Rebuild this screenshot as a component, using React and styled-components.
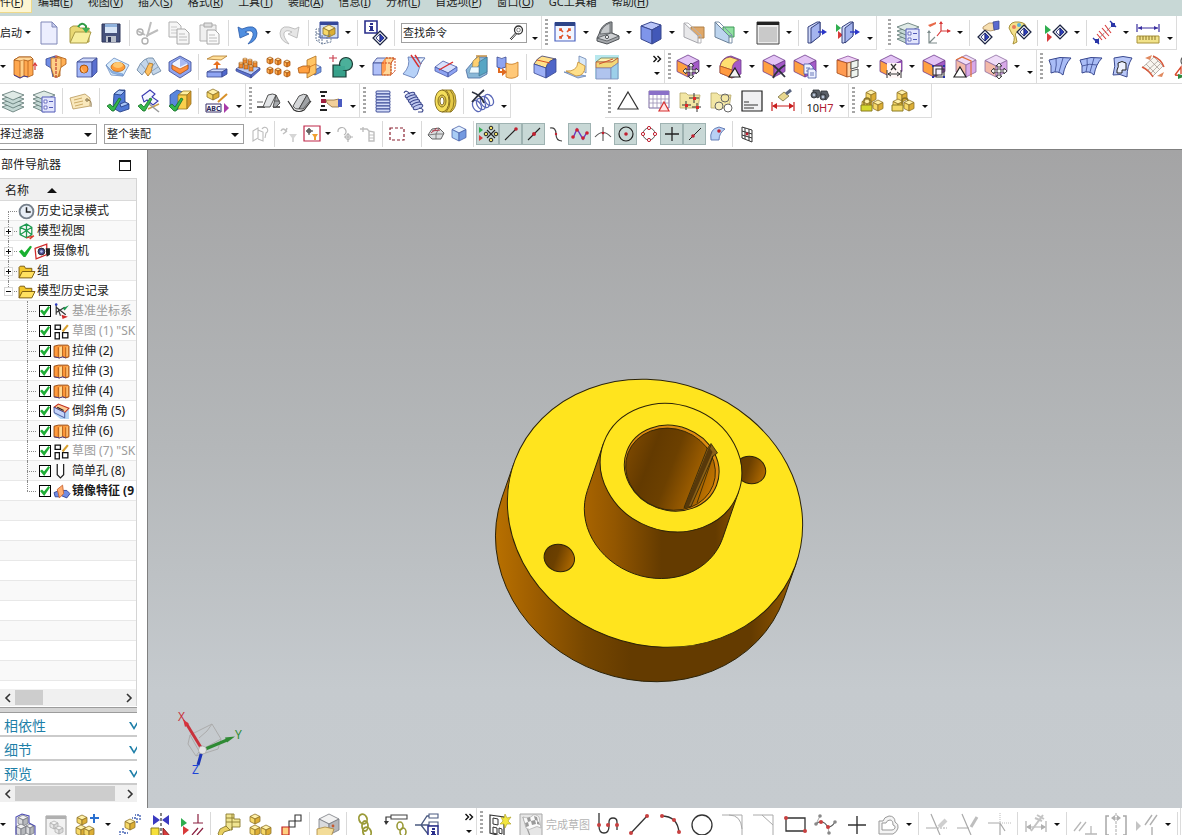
import React, { useState } from 'react';
import styled, { createGlobalStyle, css } from 'styled-components';

const GlobalStyle = createGlobalStyle`
  * { box-sizing: border-box; }
  body {
    margin: 0;
    background: #fff;
    color: #1a1a1a;
    font: 12px/20px "Noto Sans", "Noto Sans CJK SC", sans-serif;
    overflow: hidden;
  }
  button, input, select { font: inherit; color: inherit; }
`;

// ---------- drawing helpers ----------

const S = (d, c = '#333', w = 1, dash) => (
  <path d={d} fill="none" stroke={c} strokeWidth={w} strokeDasharray={dash} />
);
const F = (d, c, s = 'none', w = 1) => <path d={d} fill={c} stroke={s} strokeWidth={w} />;
const O = (x, y, r, c = 'none', s = 'none', w = 1) => (
  <circle cx={x} cy={y} r={r} fill={c} stroke={s} strokeWidth={w} />
);

const TINTS = {
  blue: ['#cfd9fb', '#8ea4f2', '#5068cc', '#39488f'],
  sky: ['#e2f0ff', '#a9cdf5', '#7399e0', '#4a62a8'],
  orange: ['#ffe3a6', '#ffb055', '#ee8420', '#a85510'],
  gold: ['#fff0a8', '#f6d868', '#dcae35', '#8f7428'],
  grey: ['#f2f2f2', '#d9dadd', '#b5b7bb', '#777a80'],
  pale: ['#f4f4f4', '#e8e8e8', '#dadada', '#b0b0b0'],
  violet: ['#e3c4f5', '#ffa040', '#a45ac8', '#6d3a8c'],
  lilac: ['#efdcf8', '#f3b9a8', '#d8a8e8', '#8c6aa0']
};

const Box = ({ x, y, s, h, t = 'blue' }) => {
  const [top, left, right, edge] = TINTS[t];
  const k = s / 2;
  return (
    <g stroke={edge} strokeWidth="0.8" strokeLinejoin="round">
      <path d={`M${x} ${y}l${s} ${k}l${-s} ${k}l${-s} ${-k}z`} fill={top} />
      <path d={`M${x - s} ${y + k}l${s} ${k}v${h}l${-s} ${-k}z`} fill={left} />
      <path d={`M${x + s} ${y + k}l${-s} ${k}v${h}l${s} ${-k}z`} fill={right} />
    </g>
  );
};

const Sheets = () => (
  <g stroke="#5a7470" strokeWidth="0.8" fill="#c4d8d4">
    <path d="M1 18l11-4 11 4-11 5z" />
    <path d="M1 14l11-4 11 4-11 5z" />
    <path d="M1 10l11-4 11 4-11 5z" />
    <path d="M1 6l11-4 11 4-11 5z" fill="#dfeae6" />
  </g>
);

const SheetList = () => (
  <>
    <Sheets />
    {F('M10 8h13v15H10z', '#e2e5fc', '#5058b8')}
    {F('M12 11h3v3h-3zM12 17h3v3h-3z', '#fff', '#5058b8', 0.8)}
    {S('M17 12.500h4M17 18.500h4', '#5058b8')}
  </>
);

const Cross4 = () => F(
  'M15 8l3 3h-2v4h4v-2l3 3-3 3v-2h-4v4h2l-3 3-3-3h2v-4h-4v2l-3-3 3-3v2h4v-4h-2z',
  '#f4f4f4', '#333', 0.9
);

const Diamond = ({ x, y }) => (
  <g transform={`translate(${x} ${y})`}>
    {F('M0 -7l7 7-7 7-7-7z', '#dfe4ea', '#1c2340', 1.2)}
    {F('M0 -4v8l-4-4z', '#fff', '#1c2370', 0.8)}
    {F('M0 -4v8l4-4z', '#2a3dbb', '#1c2370', 0.8)}
  </g>
);

const Check = () => F('M1 17l3-2 3 3 6-9 2 1-7 12H6z', '#35b84a', '#187028', 0.8);

const Locked = ({ open }) => (
  <>
    <Box x={11} y={1} s={5} h={7} t="gold" />
    <Box x={18} y={11} s={5} h={6} t="gold" />
    <Box x={7} y={10} s={5} h={6} t="gold" />
    {open ? S('M11 15v-3a3 3 0 0 1 6 0', '#8a7426', 1.4) : S('M4 16v-4a3 3 0 0 1 6 0v4', '#8a7426', 1.4)}
    {F('M1 16h11v6H1z', open ? '#f3d968' : '#d4d82e', '#8a7a20')}
  </>
);

// ---------- 24px icons ----------

const ICONS = {
  new: <>{F('M4 1h11l5 5v17H4z', '#eceefe', '#8088b8')}{F('M15 1v5h5z', '#c9cff0', '#8088b8')}</>,
  open: (
    <>
      {F('M2 21V7l3-2h5l2 2h9v14z', '#e9d873', '#a99a45')}
      {F('M2 22L7 11h16l-4 11z', '#f7ee9e', '#a99a45')}
      {S('M10 6q4-6 8-1v4', '#2f9a45', 2)}
      {F('M14 7h8l-4 5z', '#3fae54')}
    </>
  ),
  save: (
    <>
      {F('M3 3h18v18H3z', '#46527c', '#2c3558')}
      {F('M6 3h12v9H6z', '#d7e4f5')}
      {F('M6 3h12v3H6z', '#8fb2dd')}
      {F('M7 15h10v6H7z', '#b9bfca')}
      {F('M9 16h3v5H9z', '#2c3558')}
    </>
  ),
  cut: (
    <>
      {S('M11 16L15 1M10 15L22 9M9 14L2 10', '#bdbdbd', 2)}
      {O(9, 20, 3, 'none', '#b0b0b0', 1.4)}
      {O(4, 11, 3, 'none', '#b0b0b0', 1.4)}
    </>
  ),
  copy: (
    <>
      {F('M2 1h8l4 4v11H2z', '#f6f6f6', '#b0b0b0')}
      {S('M4 6h6M4 9h7M4 12h7', '#cacaca')}
      {F('M10 8h8l4 4v11H10z', '#f6f6f6', '#a8a8a8')}
      {S('M12 13h6M12 16h8M12 19h8', '#bcbcbc')}
    </>
  ),
  paste: (
    <>
      {F('M2 4h16v16H2z', '#f0f0f0', '#b0b0b0')}
      {F('M6 2h8v4H6z', '#dedede', '#a8a8a8')}
      {F('M9 9h8l4 4v10H9z', '#fafafa', '#a8a8a8')}
      {S('M11 14h6M11 17h8M11 20h8', '#bcbcbc')}
    </>
  ),
  undo: F('M3 6l2 11 9-4-4-2q6-3 8 1 1 4-5 11 9-3 9-11-1-10-15-4z', '#4f8ee0', '#2b5ba8', 0.8),
  redo: F('M21 6l-2 11-9-4 4-2q-6-3-8 1-1 4 5 11-9-3-9-11 1-10 15-4z', '#e6e6e6', '#b4b4b4', 0.8),
  assembly: (
    <>
      {F('M5 1h18v16H5z', '#cfdcf5', '#35489a')}
      {F('M5 1h18v3H5z', '#35489a')}
      <Box x={14} y={4} s={6} h={6} t="gold" />
      {S('M5 8H1v11l6 4 9-2v-4M1 12l6 3 9-1M4 9v12M7 15v8M12 16v6', '#6a7c98', 1, '2 1')}
    </>
  ),
  info: (
    <>
      {F('M1 0h12v12H1z', '#fff', '#2a2f8c', 1.6)}
      {F('M6 2h3v2H6zM5 5h4v4h1v1H5V9h1V6H5z', '#2a2f8c')}
      <Diamond x={16} y={17} />
    </>
  ),
  fit: (
    <>
      {F('M2 2h20v18H2z', '#f2f6ff', '#4a62c0', 1.2)}
      {F('M2 1h20v4H2z', '#2c4488')}
      <g stroke="#e0532a" strokeWidth="1.6" fill="none">
        <path d="M7 10V8h2M7 8l3 3M17 10V8h-2M17 8l-3 3M7 15v2h2M7 17l3-3M17 15v2h-2M17 17l-3-3" />
      </g>
    </>
  ),
  bracket: (
    <>
      {F('M1 17l2-4q2-9 11-12h2v11l7 3v3l-12 5-10-3z', '#a5a8ac', '#4e5256')}
      {F('M4 13q2-8 10-11v10z', '#c6c9cc', '#5e6266', 0.8)}
      {F('M1 17l14-5 8 3-12 5z', '#d0d2d5', '#4e5256', 0.8)}
      {O(11, 16, 1.6, '#fff', '#4e5256')}
    </>
  ),
  cube: (
    <>
      {F('M2 5L12 1l10 3-9 5z', '#b9c5f8', '#39488f')}
      {F('M2 5l11 4v14L2 18z', '#7f95ea', '#39488f')}
      {F('M22 4v14l-9 5V9z', '#4258b8', '#39488f')}
    </>
  ),
  clip: (
    <>
      {F('M9 6h13v11H9z', '#e0a868', '#b08048')}
      {F('M2 2l14 13v7L2 16z', '#e8e8ea', '#a6a6ac')}
      {S('M2 2l4 0 13 12v8h-3M16 15l3-1', '#b4b4b8')}
    </>
  ),
  clipEdit: (
    <>
      {F('M10 6h11v10H10z', '#8fe0a0', '#3f9a58')}
      {F('M2 1l14 14v7L2 16z', '#bcd4ee', '#6a8098')}
      {S('M2 1l4 0 13 13v8h-3M16 15l3-1', '#7a90a8')}
    </>
  ),
  pane: <>{F('M1 1h22v22H1z', '#ececec', '#444')}{F('M1 1h22v3H1z', '#222')}{F('M3 6h18v15H3z', '#c9c9c9')}</>,
  door: (
    <>
      {F('M3 6l9-5h3v13l-9 8H3z', '#cfd8f8', '#34407c')}
      {F('M6 7l9-6v14l-9 7z', '#a4b4ee', '#34407c')}
      {S('M13 11h6', '#2a36c8', 1.4)}
      {F('M17 8l5 3-5 3z', '#2a36c8')}
    </>
  ),
  doors: (
    <>
      {F('M0 3l5 4-5 4z', '#2fae4f')}
      {F('M2 10l5 4-5 4z', '#d83a3a')}
      {F('M6 6l8-5h3v13l-9 8H6z', '#cfd8f8', '#34407c')}
      {F('M9 7l8-6v14l-8 7z', '#a4b4ee', '#34407c')}
      {S('M14 11h6', '#2a36c8', 1.4)}
      {F('M19 8l5 3-5 3z', '#2a36c8')}
    </>
  ),
  layersList: <SheetList />,
  axes: (
    <>
      {S('M14 10V1M14 10h9M14 10l-4 5', '#d83a3a', 1.2)}
      {F('M12 3l2-3 2 3zM20 8l4 2-4 2z', '#d83a3a')}
      {F('M1 4l8-3v2l-6 3z', '#e86a4a')}
      {S('M2 10v12h8M2 22l6-6', '#7e8c8c', 1.2)}
      {F('M0 12l2-3 2 3z', '#7e8c8c')}
    </>
  ),
  handDiamond: (
    <>
      <Diamond x={9} y={16} />
      {F('M7 6l6-4 6 0v7l-5 1-7-2z', '#f7dfb0', '#a8895a', 0.8)}
      {F('M17 1l6-1v8l-5 1z', '#5a6ad0', '#39488f', 0.8)}
    </>
  ),
  palette: (
    <>
      {F('M2 7q1-7 10-6 9 1 7 8l-4 4-4-2q-4 1-2 5l1 5-4 2q3-8-1-10z', '#f4e08a', '#a8923a')}
      {O(7, 6, 2, '#e8785a')}
      {O(12, 4, 2, '#5ab0d8')}
      {O(16, 6, 2, '#8fcf6a')}
      <Diamond x={17} y={11} />
    </>
  ),
  playDiamond: (
    <>
      {F('M1 4l6 5-6 4z', '#2fae4f')}
      {F('M3 12l5 4-5 5z', '#d83a3a')}
      <Diamond x={16} y={11} />
    </>
  ),
  measure: (
    <>
      {S('M3 20L21 3', '#777', 1, '2 1')}
      {S('M6 10l7 8M9 7l7 8M12 4l6 8M4 13l5 6', '#d83a3a', 1.1)}
      {S('M0 17l6 6M17 0l6 6', '#2a36a8', 1.4)}
      {F('M2 18h4v4H2zM18 2h4v4h-4z', '#2a36a8')}
    </>
  ),
  ruler: (
    <>
      {S('M1 3v8M23 3v8M2 7h20', '#3a2fa0', 1.2)}
      {F('M2 7l4-2v4zM22 7l-4-2v4z', '#3a2fa0')}
      {F('M1 15h22v7H1z', '#f2e38a', '#a8923a')}
      {S('M4 15v4M7 15v4M10 15v4M13 15v4M16 15v4M19 15v4', '#8a762a')}
    </>
  ),
  extrude: (
    <>
      {F('M1 5l5-3h12l2 2v16l-5 2-4-1-4 2-6-3z', '#ffa850', '#a85510', 0.8)}
      {F('M1 5l5-3h12l2 2-5 2-4-1-4 1z', '#ffd79a', '#a85510', 0.8)}
      {F('M7 6l4-1v16l-4 2z', '#ffcf88')}
      {S('M7 6v17M11 5v16M15 6v16', '#b86018', 0.8)}
      {S('M1 20l6 3 4-2 4 1', '#3a3a9a', 1)}
      {S('M22 8v7M20 11l2-3 2 3', '#d83a3a', 1.2)}
    </>
  ),
  revolve: (
    <>
      {F('M2 4l9-3v11l-2 10-2-9-5-3z', '#6f8ce4', '#39488f', 0.8)}
      {F('M22 4l-9-3v21l3-1v-8l6-4z', '#ffb055', '#a85510', 0.8)}
      {F('M7 3h10v9l-3 10h-4L7 12z', '#ffcf88', '#b86818', 0.8)}
      {S('M12 0v24', '#b02020', 1, '3 1')}
    </>
  ),
  holeCube: (
    <>
      {F('M2 7l6-4h14l-5 4z', '#cfd9fb', '#39488f', 0.8)}
      {F('M2 7h15v15H2z', '#a4b8f8', '#39488f', 0.8)}
      {F('M22 3v14l-5 5V7z', '#5a70d0', '#39488f', 0.8)}
      {O(9, 14, 4, '#ff9a40', '#a85510')}
      {F('M7 12a4 4 0 0 0 4 6 5 5 0 0 1-4-6z', '#ffe0a0')}
    </>
  ),
  pad: (
    <>
      {F('M0 10L8 3l15 7-6 11L5 20z', '#d8ecfc', '#6a8cc0', 0.8)}
      {F('M0 10l6 8 11 3v-2L6 16z', '#8fb6e8', '#6a8cc0', 0.6)}
      <ellipse cx="12" cy="12" rx="7" ry="4.500" fill="#ff9c38" stroke="#b86818" strokeWidth="0.8" />
      <ellipse cx="12" cy="10" rx="5" ry="3" fill="#ffc870" />
    </>
  ),
  rib: (
    <>
      {F('M0 15Q6 1 16 3l8 13-8 4q-2-7-8-4l-3 4z', '#c4d6ea', '#66809c', 0.8)}
      {F('M8 17l4-9 4 1-2 8-3 4z', '#ffc060', '#a87020', 0.8)}
      {S('M3 8l6 7M9 4l3 6M18 8l-4 5M21 12l-6 4', '#7a94b0', 0.8)}
    </>
  ),
  inset: (
    <>
      {F('M12 1l11 6v9l-11 7-11-7V7z', '#8fa4f0', '#39488f', 0.8)}
      {F('M12 3l8 5v6l-8 5-8-5V8z', '#eef3ff', '#5068b8', 0.8)}
      {F('M4 10l8 4 8-4v4l-8 5-8-5z', '#ff8e3c', '#c05a18', 0.8)}
      {F('M12 3l8 5-8 4z', '#a9baf4')}
    </>
  ),
  offsetUp: (
    <>
      {F('M2 4l6-3h14l-6 4z', '#ffdf9a', '#b07828', 0.8)}
      {S('M12 15V9', '#e87020', 2)}
      {F('M8 10l4-4 4 4z', '#e87020')}
      {F('M2 17l6-3h14l-5 3z', '#cfd9fb', '#39488f', 0.8)}
      {F('M2 17h15v5H2z', '#8ea4f2', '#39488f', 0.8)}
      {F('M22 14v5l-5 3v-5z', '#5068cc', '#39488f', 0.8)}
    </>
  ),
  studs: (
    <>
      {F('M0 14l9-6 15 5-9 7z', '#bccdf8', '#39488f', 0.7)}
      {F('M0 14l15 6v3L0 16zM15 20l9-7v2l-9 8z', '#5a70d0', '#39488f', 0.7)}
      {[[9, 7], [14, 8], [19, 10], [5, 11], [10, 12], [15, 14]].map(([x, y]) => (
        <g key={`${x}-${y}`}>
          <rect x={x - 2} y={y - 3} width="4" height="5" fill="#f08a30" stroke="#8a4a10" strokeWidth="0.6" />
          <ellipse cx={x} cy={y - 3} rx="2" ry="1" fill="#ffd08a" stroke="#8a4a10" strokeWidth="0.4" />
        </g>
      ))}
    </>
  ),
  cubes: (
    <>
      {[[3, 2], [11, 3], [20, 5], [3, 12], [11, 13], [20, 15]].map(([x, y]) => (
        <Box key={`${x}-${y}`} x={x} y={y} s={3} h={4} t="orange" />
      ))}
    </>
  ),
  mirror: (
    <>
      <Box x={17} y={9} s={6} h={5} t="sky" />
      {F('M9 5l9-4v17l-9 5z', '#ffc565', '#b07020', 0.8)}
      {F('M0 13l5-2h7l-1 7H1z', '#ffa040', '#a85510', 0.8)}
      {S('M9 13l9-4', '#d88028')}
    </>
  ),
  unite: (
    <>
      {F('M4 10h13v12H4z', '#37a08a', '#1c3a34', 1.2)}
      {O(17, 9, 6.5, '#4bb09a', '#1c3a34', 1.2)}
      {F('M5 11h11v4H5z', '#3fa892')}
      {S('M4 0v7M0 3h8', '#c83a4a', 1.1)}
    </>
  ),
  trimBox: (
    <>
      {F('M1 8l4-5h10l-3 5z', '#cfd9fb', '#39488f', 0.8)}
      {F('M1 8h9v12H1z', '#b0c0f8', '#39488f', 0.8)}
      {F('M10 8l4-5h8l-3 5v12h-9z', '#ffd79a', '#c86a18', 0.8)}
      {F('M10 8l4-5v12l-4 5z', '#ff9a50')}
      {S('M14 3h9v13l-4 4h-9M19 8v12M10 8h9l4-5', '#d04a20', 1, '2 1')}
    </>
  ),
  trimSheet: (
    <>
      {F('M5 2l17 1q-5 5-6 11t-5 9L0 19Q8 11 5 2z', '#b7d2f8', '#5a74b0', 0.8)}
      {S('M8 0l8 12M12 0l6 9', '#d83030', 1.4)}
      {F('M15 3h7q-4 3-4 6z', '#eef5ff', '#5a74b0', 0.6)}
    </>
  ),
  slab: (
    <>
      {F('M1 12l8-6 14 6-9 6z', '#d7e0fc', '#4a5aa8', 0.8)}
      {F('M1 12l13 6v4L1 16zM14 18l9-6v4l-9 6z', '#8ea4f2', '#4a5aa8', 0.8)}
      {S('M5 15L19 7', '#d83030', 1.4)}
    </>
  ),
  draft: (
    <>
      {F('M1 15L12 2h10v17l-7 4H3z', '#8ab8d8', '#4a6aa0', 0.8)}
      {F('M8 6l6-5 1 8-8 9z', '#ffd070', '#a88030', 0.6)}
      {F('M14 7l8-5v15l-8 4z', '#58a6c4', '#3a6a88', 0.6)}
      {F('M6 12h8v6H4z', '#eefaff', '#5a84a8', 0.6)}
      {S('M11 1h11', '#c08838', 1.4)}
    </>
  ),
  replace: (
    <>
      {F('M1 2q5 3 9 0v10q-5 3-9 0z', '#8ea4f2', '#39488f', 0.8)}
      {F('M10 8q6 3 12-1v14q-6 4-12 1z', '#ffc878', '#c87a20', 0.8)}
      {S('M3 13v4h4', '#e06a20', 2)}
      {F('M6 13l5 4-5 4z', '#e06a20')}
    </>
  ),
  edgeBlend: (
    <>
      {F('M1 9q3-6 8-8l14 3q-8 1-10 9z', '#ffe08a', '#3a3a6a', 0.8)}
      {F('M1 9l12 4v10L1 18z', '#9db0f6', '#39488f', 0.8)}
      {F('M23 4v13l-10 6V13q2-8 10-9z', '#4f66c8', '#39488f', 0.8)}
      {S('M4 5l13 3', '#d85020', 1)}
    </>
  ),
  faceBlend: (
    <>
      {F('M15 1l7 3v14l-7-5z', '#d8e8fa', '#6a84b0', 0.8)}
      {F('M0 17l9 1 13 3-8 2z', '#a8c4f4', '#6a84b0', 0.8)}
      {F('M2 16q11 1 12-9l7 4q0 10-9 10z', '#ffe08a', '#c08a30', 0.8)}
    </>
  ),
  chamfer: (
    <>
      {F('M0 0h24v24H0z', '#b8e8ee')}
      {F('M1 7l5-4h17l-6 4z', '#fff2b0', '#6a7a50', 0.8)}
      {F('M1 7h16l6-4v5l-7 5H1z', '#f2d878', '#c05030', 0.8)}
      {F('M1 13h15v11H1z', '#b0c4ee', '#7a8ab8', 0.8)}
      {F('M16 13l7-5v16h-7z', '#9cd0ea', '#7a8ab8', 0.8)}
      {S('M4 9l14-5', '#d05030')}
    </>
  ),
  moveFace: <><Box x={12} y={0} s={11} h={11} t="violet" /><Cross4 /></>,
  pullFace: (
    <>
      {F('M1 11Q3 2 12 1l10 4v14l-9 4-12-5z', '#a45ac8', '#6d3a8c', 0.8)}
      {F('M1 11q2-8 10-9l9 3q-7 2-7 10z', '#ffe070', '#8a4a60', 0.8)}
      {F('M1 11l12 4v8L1 18z', '#ff9a40', '#b05820', 0.8)}
      {F('M16 13l5 9H10z', '#f3f3f3', '#222', 1.2)}
    </>
  ),
  deleteFace: (
    <>
      <Box x={12} y={0} s={11} h={11} t="violet" />
      {S('M11 10q6 5 12 12M23 10q-8 5-12 13', '#2e333c', 1.8)}
    </>
  ),
  copyFace: (
    <>
      <Box x={12} y={0} s={11} h={11} t="violet" />
      {F('M11 9h6l3 3v7h-9z', '#eef2ff', '#4a5aa8', 0.8)}
      {F('M15 14h6l2 2v7h-8z', '#eef2ff', '#4a5aa8', 0.8)}
      {S('M13 13h4M13 16h2M17 18h4M17 20h4', '#4a5aa8', 0.8)}
    </>
  ),
  patternFace: (
    <>
      {F('M1 5l11-4 11 4-9 4z', '#ecd0f5', '#8a4a9c', 0.8)}
      {F('M1 5l10 3v14L1 18z', '#ff9a50', '#a04818', 0.8)}
      {F('M11 8l4-1v14l-4 1z', '#ffd0a0', '#a04818', 0.8)}
      {F('M15 7l7-2v7l-7 2zM15 16l7-2v7l-7 2z', '#eef4ee', '#555')}
    </>
  ),
  dimFace: (
    <>
      <Box x={12} y={0} s={11} h={11} t="violet" />
      {F('M8 8h14v15H8z', '#fff6f6')}
      {S('M12 9l5 6M17 9l-5 6', '#333', 1.2)}
      {S('M8 15v8M22 15v8M9 19h12M12 17l-3 2 3 2M18 17l3 2-3 2', '#333', 1)}
    </>
  ),
  groupFace: (
    <>
      <Box x={12} y={0} s={11} h={11} t="violet" />
      {F('M11 11h9v9h-9z', '#f6f0ff', '#333', 1.1)}
      {S('M14 14h8v8h-8z', '#333', 1.1)}
      {F('M10 10h2v2h-2zM21 10h2v2h-2zM10 21h2v2h-2zM21 21h2v2h-2z', '#2a36a8')}
    </>
  ),
  resize: (
    <>
      <Box x={13} y={0} s={10} h={12} t="lilac" />
      {S('M3 5l6-3 9 4v16M9 2l9 4', '#e0703a', 1.2)}
      {F('M7 12l6 10H1z', '#fff', '#222', 1.2)}
    </>
  ),
  moveAll: <><Box x={12} y={0} s={11} h={11} t="lilac" /><Cross4 /></>,
  surf: (
    <>
      {F('M1 5Q12 1 23 3Q17 9 15 20Q10 15 3 18Q4 10 1 5z', '#a9bcf6', '#39488f')}
      {S('M8 3Q9 10 7 17M15 3Q13 10 11 17', '#39488f', 0.8)}
    </>
  ),
  mesh: (
    <>
      {F('M1 5Q12 1 23 3Q17 9 15 20Q10 15 3 18Q4 10 1 5z', '#a9bcf6', '#39488f')}
      {S('M8 3Q9 10 7 17M15 3Q13 10 11 17M3 11Q11 8 18 10', '#39488f', 0.8)}
    </>
  ),
  surfHole: (
    <>
      {F('M4 3Q13 0 22 3Q17 11 17 22Q10 18 3 20Q6 11 4 3z', '#b9c8f8', '#39488f')}
      {F('M8 8Q12 5 16 8V15H12V18H7V15Q9 12 8 8z', '#eef2ff', '#222', 1)}
    </>
  ),
  surfNet: (
    <>
      {F('M2 12L13 2l9 9-10 10z', '#f8f5ef', '#a8a098', 0.8)}
      {S('M5 9l10 10M9 5l10 10M6 16L17 6M9 19l10-10', '#a8a098', 0.8)}
      {S('M1 12Q8 15 12 22M12 1Q20 4 23 12', '#d8583a', 1.4)}
      {F('M4 3l7-3-2 5zM16 21l7-4-2 5z', '#e08a60')}
    </>
  ),
  surfCurve: (
    <>
      {O(14, 6, 5, 'none', '#555', 1.2)}
      {S('M3 20l6-8v7M3 20l8 1', '#d8482a', 1.3)}
      {F('M6 19l8 2-8 3z', '#2f8a3f')}
    </>
  ),
  layers: <Sheets />,
  tag: (
    <>
      {F('M1 9l15-4 5 4v8L4 20z', '#f9e8bc', '#b8985a', 0.8)}
      {O(18, 11, 1.2, '#fff', '#7a6028')}
      {S('M19 11q4 0 3 7', '#7a6028', 0.8)}
      {S('M5 11l8-2M5 14l9-2M6 17l8-2', '#c09a50', 0.8)}
    </>
  ),
  stepCheck: (
    <>
      {F('M8 5l5-4h6v12l4 2v5l-9 3-7-4z', '#4f78d4', '#1f3a80', 0.8)}
      {F('M8 5l5-4 6 1-4 4z', '#a9c6f8', '#1f3a80', 0.8)}
      {F('M14 15l5-2 4 2-8 3z', '#a9c6f8', '#1f3a80', 0.8)}
      <Check />
    </>
  ),
  sketchCheck: (
    <>
      {F('M5 7l8-6 5 4-3 3 6 4-5 4-6-5-3 2z', '#f4f6ff', '#3a3ab0', 1.1)}
      {S('M11 20L22 15', '#c8a050', 1.6)}
      {S('M12 15l10 8', '#9a9a9a', 1.6)}
      <Check />
    </>
  ),
  boxCheck: (
    <>
      {F('M2 6l7-5 6 2v13l-6 5-7-3z', '#5a86dc', '#2a4690', 0.8)}
      {F('M10 6l5-4h8l-4 4z', '#fff0a0', '#9a7a20', 0.8)}
      {F('M10 6h9v14h-9z', '#fbd04c', '#9a7a20', 0.8)}
      {F('M23 2v13l-4 5V6z', '#d8962a', '#9a7a20', 0.8)}
      <Check />
    </>
  ),
  abc: (
    <>
      <Box x={8} y={0} s={6} h={5} t="gold" />
      {S('M22 5L13 13', '#d8912a', 2)}
      {F('M1 15h15v8H1z', '#fff', '#38306a')}
      <text x="8.500" y="22" fontSize="7" fontWeight="700" textAnchor="middle" fill="#28285a">ABC</text>
      {F('M19 14l5 5-5 5z', '#a83aa8')}
    </>
  ),
  weldA: (
    <>
      {S('M0 18h8M16 18h7', '#333', 1.4)}
      {F('M6 18l5-12q5-2 8 0l-6 12z', '#e2e4e6', '#444', 0.9)}
      {F('M19 6l4 8-4 4h-3z', '#a6a9ac', '#444', 0.9)}
      {S('M0 13h6M18 12h5', '#555', 0.9)}
    </>
  ),
  weldB: (
    <>
      {S('M0 12l6 9q5 3 10 0l7-9', '#333', 1.2)}
      {F('M5 17l6-10q5-3 8-1l-8 14q-4 1-6-3z', '#d4d6d8', '#444', 0.9)}
      {F('M19 6l3 6-7 8-4 0z', '#9fa2a5', '#444', 0.9)}
    </>
  ),
  handList: (
    <>
      {F('M1 2h7v2H1zM2 6h4v2H2zM2 16h4v2H2zM1 20h7v2H1z', '#222')}
      {F('M2 10h5v4H2z', '#a02040')}
      {F('M7 11h8l5-1v8h-7l-5-4z', '#f2cf9a', '#8a6a3a', 0.8)}
      {F('M19 10h4v8h-4z', '#4a5ac0')}
    </>
  ),
  coil: (
    <g stroke="#2a3a8c" strokeWidth="0.9" fill="#d4dcf8">
      {[2, 5, 8, 11, 14, 17, 20].map((y) => (
        <rect key={y} x="5" y={y} width="14" height="3" rx="1" />
      ))}
    </g>
  ),
  spring: (
    <>
      <g stroke="#3a468c" strokeWidth="1" fill="#c0caf0">
        {[0, 1, 2, 3, 4, 5].map((i) => (
          <ellipse key={i} cx={8 + i * 1.6} cy={6 + i * 2.4} rx="5" ry="2" transform={`rotate(-20 ${8 + i * 1.6} ${6 + i * 2.4})`} />
        ))}
      </g>
      {S('M8 5Q4 0 2 4M17 19q6 1 3 4h-4', '#3a468c', 1.2)}
    </>
  ),
  rings: (
    <>
      {F('M9 1h10q4 4 4 11 0 7-5 11H9z', '#e6ca48', '#8a7424', 0.9)}
      {S('M13 1q4 4 4 11t-4 11M17 1q4 4 4 11t-4 11', '#8a7420', 1)}
      <ellipse cx="9" cy="12" rx="7" ry="11" fill="#f3dd5a" stroke="#7a6418" strokeWidth="0.9" />
      <ellipse cx="9" cy="12" rx="4" ry="6" fill="#e0c850" stroke="#7a6418" strokeWidth="0.9" />
      <ellipse cx="9" cy="12" rx="2" ry="4" fill="#fff" stroke="#7a6418" strokeWidth="0.9" />
    </>
  ),
  springX: (
    <>
      <g stroke="#5a68b8" strokeWidth="1.3" fill="none">
        <ellipse cx="7" cy="17" rx="4" ry="6" transform="rotate(-30 7 17)" />
        <ellipse cx="11" cy="15" rx="4" ry="6" transform="rotate(-30 11 15)" />
        <ellipse cx="15" cy="13" rx="4" ry="6" transform="rotate(-30 15 13)" />
        <ellipse cx="19" cy="11" rx="4" ry="6" transform="rotate(-30 19 11)" />
      </g>
      {S('M2 3q9 3 12 11M14 1Q7 7 2 13', '#2e3340', 1.8)}
    </>
  ),
  triangle: F('M12 3l10 17H2z', '#fff', '#333', 1.2),
  tableTri: (
    <>
      {F('M2 2h20v17H2z', '#fff', '#7a6aa0')}
      {F('M2 2h20v4H2z', '#8a70c8')}
      {S('M2 10h20M2 14h20M6 6v13M10 6v13M14 6v13M18 6v13', '#9a90b4', 0.8)}
      {F('M17 13l5 9H12z', '#ffe4e4', '#d83030', 1.2)}
    </>
  ),
  folderPlus: (
    <>
      {F('M2 19V4h6l2 2h12l-2 13z', '#f2e6a4', '#b4a668', 0.8)}
      {S('M16 4v10M11 9h10M8 12v9M4 16h9M19 14v9M14 18h9', '#333', 1)}
      {F('M15 8h3v3h-3zM7 15h3v3H7zM18 17h3v3h-3z', '#e02828')}
    </>
  ),
  folderCircle: (
    <>
      {F('M2 19V4h6l2 2h12l-2 13z', '#f2e6a4', '#b4a668', 0.8)}
      {O(16, 9, 4, 'none', '#666', 1)}
      {O(10, 17, 4, '#f6edb8', '#666', 1)}
      {O(19, 19, 4, '#fff', '#666', 1)}
    </>
  ),
  note: <>{F('M2 2h20v20H2z', '#f0f0f2', '#222', 1.2)}{S('M4 13h5M4 16h14M4 19h10', '#333', 1.1)}</>,
  dimBrush: (
    <>
      {F('M7 8l6-5 5 4-6 5z', '#e8d890', '#7a7040', 0.8)}
      {S('M15 5l5-4', '#5a6680', 3)}
      {S('M1 13v9M23 13v9M2 17h20', '#c82020', 1.2)}
      {F('M1 17l5-3v6zM23 17l-5-3v6z', '#c82020')}
    </>
  ),
  fitSearch: (
    <>
      <g fill="#5a6068" stroke="#2e3238" strokeWidth="0.8">
        <path d="M5 1h6l2 4-3 4-5-3zM13 2h6l2 5-3 4-5-3z" />
        <circle cx="6" cy="6" r="3" />
        <circle cx="15" cy="8" r="3" />
      </g>
      {O(6, 6, 1.4, '#b8c4d8')}
      {O(15, 8, 1.4, '#b8c4d8')}
      <text x="12" y="23" fontSize="11" textAnchor="middle" fill="#222">10<tspan fill="#b02030">H7</tspan></text>
    </>
  ),
  lock: <Locked />,
  unlock: <Locked open />,

  // assembly and sketch bars
  wireCubes: (
    <>
      <Box x={10} y={2} s={5} h={6} t="grey" />
      <Box x={8} y={11} s={5} h={7} t="grey" />
      <Box x={17} y={11} s={4} h={7} t="grey" />
      {S('M3 24V4l6-3 7 2v7l6 3v11', '#4a4ab0', 1.1)}
    </>
  ),
  greyPane: (
    <>
      {F('M2 3h20v20H2z', '#f2f2f2', '#9a9a9a')}
      {F('M2 3h20v3H2z', '#b0b0b0')}
      <Box x={10} y={8} s={4} h={4} t="pale" />
      <Box x={15} y={13} s={4} h={4} t="pale" />
    </>
  ),
  addPart: (
    <>
      <Box x={7} y={2} s={5} h={5} t="gold" />
      <Box x={6} y={12} s={5} h={6} t="gold" />
      <Box x={14} y={13} s={5} h={6} t="gold" />
      {S('M19 1v9M15 5h9', '#2a70d0', 2)}
    </>
  ),
  movePart: (
    <>
      <Box x={12} y={6} s={5} h={6} t="gold" />
      {S('M2 18v5h5M5 15v5h5M22 7V2h-5M19 10V5h-5', '#3a5ab0', 1.3, '2 1')}
    </>
  ),
  mirrorPart: (
    <>
      {S('M12 0v24', '#333', 1.2, '3 2')}
      {F('M4 2l7 5-7 5zM20 2l-7 5 7 5z', '#3a3ac0')}
      {F('M2 15h8v9H2z', '#f6e03a', '#8a7a20')}
      {F('M14 15l8 9h-8z', '#d83a3a', '#802020')}
    </>
  ),
  constrain: (
    <>
      {F('M1 5l6 5-6 4z', '#2fae4f')}
      {F('M3 13l6 4-6 5z', '#d83a3a')}
      {S('M18 1v9M13 10h10M12 22l6-7M17 22l6-7', '#8a2040', 1.2)}
    </>
  ),
  connector: (
    <>
      {F('M9 4V1h8v5h6v8h-8v3H9z', '#f0e490', '#8a7a30', 0.9)}
      {S('M15 1v16M9 9h14M9 5h8', '#8a7a30', 0.9)}
      {F('M1 21l2-5 6-3 4 4-6 2-3 5z', '#e8cf60', '#8a7a30', 0.9)}
    </>
  ),
  partCubes: (
    <>
      <Box x={7} y={1} s={5} h={5} t="gold" />
      <Box x={7} y={12} s={5} h={6} t="gold" />
      <Box x={18} y={12} s={5} h={6} t="gold" />
    </>
  ),
  stairs: (
    <>
      {F('M16 2h6v6h-6z', '#fff', '#333', 1.1)}
      {F('M10 8h6v6h-6z', '#fff', '#333', 1.1)}
      {F('M3 14h7v8H3z', '#ffd080', '#c02020', 1.2)}
    </>
  ),
  crate: (
    <>
      <Box x={13} y={1} s={10} h={11} t="grey" />
      {F('M1 16l8-2 9 2-3 8H1z', '#f3dc98', '#a8873e', 0.8)}
      {O(17, 13, 1.4, '#c85a30')}
    </>
  ),
  chain: (
    <g fill="none" stroke="#9a9a38" strokeWidth="1.8">
      <ellipse cx="10" cy="6" rx="4" ry="5" transform="rotate(-20 10 6)" />
      <ellipse cx="12" cy="13" rx="3" ry="5" />
      <ellipse cx="14" cy="19" rx="4" ry="5" transform="rotate(-20 14 19)" />
    </g>
  ),
  chainLink: (
    <>
      {F('M7 2h16v4H7z', '#fff', '#444', 1.1)}
      {S('M7 4H2v6', '#333', 1.2)}
      {F('M0 8h5l-3 4z', '#333')}
      <g fill="none" stroke="#9a9a38" strokeWidth="1.6">
        <ellipse cx="16" cy="13" rx="3" ry="4" />
        <ellipse cx="19" cy="19" rx="3" ry="4" />
      </g>
    </>
  ),
  partTree: (
    <>
      {S('M0 12h6l6-9h3M6 12h9M6 12l7 9', '#4a5a80', 1.3)}
      {F('M14 1h9v4h-9zM14 9h9v4h-9z', '#fff', '#4a5a80', 1.1)}
      {F('M13 13h10v11H13z', '#fff', '#2a2f8c', 1.5)}
      {F('M17 15h3v2h-3zM16 18h4v3h1v1h-5v-1h1v-2h-1z', '#2a2f8c')}
    </>
  ),
  sketch: (
    <>
      {S('M2 2l14 2v20L2 20z', '#333', 1.2)}
      {S('M5 5l5 1v6l-5-1zM5 14l4 1v6l-4-1zM11 15l3 1v5l-3-1z', '#333', 1)}
      {F('M17 1l2 4 4-1-3 4 3 3-4 0-2 4-1-4-4 0 3-3-2-4 3 1z', '#f2e640', '#a89a20', 0.6)}
    </>
  ),
  flag: (
    <>
      {F('M1 1h22v23H1z', '#e6e6e6', '#a8a8a8')}
      {S('M4 4l7 19', '#999', 1.2)}
      {F('M4 4q6 2 9-1t7 1l2 11q-4-3-8 0t-7 0z', '#fafafa', '#aaa', 0.7)}
      {F('M8 5l3-1 1 4-3 1zM15 3l3 1 1 4-3-1zM12 8l4-1 1 4-4 1zM6 10l3-1 1 4-3 1zM18 8l2 1 1 3-3-1z', '#9a9a9a')}
    </>
  ),
  profile: (
    <>
      {S('M2 0v13q0 7 5 7t5-7V9q0-4 4-4t4 4v8', '#333', 1.3)}
      {O(2, 12, 2, '#c84040')}{O(11, 12, 2, '#c84040')}{O(20, 12, 2, '#c84040')}
    </>
  ),
  line: <>{S('M3 20L19 3', '#333', 1.3)}{O(3, 20, 2, '#c84040')}{O(19, 3, 2, '#c84040')}</>,
  arc: <>{S('M2 3q17 0 18 17', '#333', 1.3)}{O(3, 3, 2, '#c84040')}{O(15, 7, 2, '#c84040')}{O(20, 19, 2, '#c84040')}</>,
  circle: O(12, 12, 10, 'none', '#333', 1.3),
  fillet: <>{S('M1 2h20v20', '#aaa', 1)}{S('M8 2q12 0 13 14', '#aaa', 1)}</>,
  corner: <>{S('M1 2h20v20', '#aaa', 1)}{S('M10 2l11 10', '#aaa', 1)}</>,
  rect: <>{S('M3 5h19v13H3z', '#333', 1.3)}{O(3, 5, 2, '#c84040')}{O(22, 18, 2, '#c84040')}</>,
  spline: (
    <>
      {S('M2 11q6-6 12 3 4 0 7-5', '#555', 1.1)}
      {S('M2 11l4-8M15 20l-1-6', '#aaa')}
      {O(2, 11, 1.8, '#888')}{O(6, 3, 1.8, '#888')}{O(15, 20, 1.8, '#888')}{O(21, 9, 1.8, '#888')}
      {O(7, 9, 2, '#c84040')}{O(14, 14, 2, '#c84040')}
    </>
  ),
  plus: S('M12 3v18M3 12h18', '#333', 1.4),
  offsetCurve: (
    <>
      {F('M3 8h4q1-4 6-5 6 0 6 6 4 2 3 6t-5 6H3z', '#f4f4f4', '#999')}
      {F('M6 17v-7h4q1-3 4-3t3 5q3 1 2 3t-3 2z', '#fff', '#999')}
    </>
  ),
  trim: <>{S('M6 1l9 21M1 15h10', '#aaa', 1.2)}{S('M12 15h10', '#aaa', 1, '2 1')}{S('M14 14l7-7', '#cfcfcf', 4)}</>,
  extend: <>{S('M6 1l9 21M1 15h12', '#aaa', 1.2)}{S('M15 14l6-10', '#bebebe', 3)}</>,
  makeCorner: <>{S('M13 10v14M1 10h12l5 8', '#aaa', 1.2)}{S('M13 0v10h11', '#bbb', 1, '1 1')}</>,
  dimension: (
    <>
      {S('M2 8v11M22 8v11M3 14h18', '#b0b0b0', 1.2)}
      {F('M2 14l5-3v6zM22 14l-5-3v6z', '#b0b0b0')}
      {S('M7 18L19 2M11 5l7 3M13 2l7 4', '#c4c4c4', 2)}
    </>
  ),
  parallel: S('M1 18L8 9M6 18l7-9M18 13v8M12 21h12', '#b8b8b8', 1.3),
  symmetric: (
    <>
      {S('M5 3H2v19h3M19 3h3v19h-3', '#a8a8a8', 1.5)}
      {S('M12 0v24', '#aaa', 1, '3 1')}
      {F('M7 5l4-3v6zM17 5l-4-3v6z', '#b0b0b0')}
    </>
  ),
  constraints: <>{F('M1 8l5 5-5 5z', '#c4c4c4')}{S('M10 12L17 2M15 12l7-10M17 14v10', '#b0b0b0', 1.4)}</>
};

// ---------- selection bar icons, 18px ----------

const SMALL = {
  filterBox: S('M2 6l5-3v10l-5 3zM7 5l5 2v9l-5-2M11 4a3 3 0 1 1 4 4l-1 5', '#bcbcbc', 1.1),
  filterUndo: <>{S('M1 6q2-4 5 0l1-3M3 9l4-3', '#c0c0c0', 1.5)}{F('M9 9h8l-3 4v4h-2v-4z', '#d6d6d6')}</>,
  filterSel: (
    <>
      {F('M1 1h16v15H1z', '#fff', '#c0284a', 1.2)}
      {S('M6 3v7M3 6h7', '#333')}
      {O(6, 6, 2, 'none', '#333', 0.8)}
      {F('M9 9h6l-2 3v3h-2v-3z', '#f0a030')}
    </>
  ),
  rotSel: <>{S('M2 7a4 4 0 1 1 6 3M12 8v9M8 12h9', '#b4b4b4', 1.2)}{O(12, 12, 2.5, 'none', '#b4b4b4')}</>,
  backSel: <>{S('M1 4h7l3 3M4 2v5M10 6v10h5V7z', '#bebebe', 1.4)}{S('M10 10h5M10 13h5', '#bebebe')}</>,
  marquee: S('M2 3h14v12H2z', '#8a2030', 1.2, '3 2'),
  meshBody: (
    <>
      {F('M1 10l4-6 7-1 5 5-3 6H5z', '#dcdee0', '#555', 0.9)}
      {S('M9 14V9l3-6M9 9h8M1 10l8-1', '#666', 0.8)}
      {S('M5 6l8-1M4 8l6-5', '#b04050')}
    </>
  ),
  solidBody: <Box x={9} y={1} s={7} h={8} t="sky" />,
  snapAll: (
    <>
      {F('M0 2l4 3-4 3z', '#2fae4f')}{F('M0 10l4 3-4 3z', '#d83a3a')}
      {S('M8 5l8 8M16 5l-8 8', '#222', 1.1)}
      {O(12, 3, 1.8, '#f2e060', '#222')}{O(12, 15, 1.8, '#f2e060', '#222')}
      {O(7, 9, 1.8, '#f2e060', '#222')}{O(17, 9, 1.8, '#f2e060', '#222')}
    </>
  ),
  snapEnd: <>{S('M3 15L14 4', '#222', 1.1)}{O(14, 4, 1.8, '#c02030')}</>,
  snapMid: <>{S('M3 15L15 3', '#222', 1.1)}{O(9, 9, 2, '#c02030')}</>,
  snapCtrl: <>{S('M2 3q6-1 6 6t6 7', '#444', 1.2)}{O(8, 9, 1.2, '#c02030')}</>,
  snapPole: (
    <>
      {S('M2 13L6 4l6 10 4-7', '#6a3ac0', 1.4)}
      {O(2, 12, 1.8, '#d02030')}{O(6, 5, 1.8, '#d02030')}{O(12, 13, 1.8, '#d02030')}{O(16, 8, 1.8, '#d02030')}
    </>
  ),
  snapCross: <>{S('M9 2v14M1 12q8-9 16 0', '#555', 1.1)}{O(9, 8, 1.3, '#c02030')}</>,
  snapCenter: <>{O(9, 9, 7, 'none', '#222', 1.2)}{O(9, 9, 1.8, '#c02030')}</>,
  snapQuad: (
    <>
      {O(9, 9, 6, 'none', '#555', 1)}
      {O(9, 3, 1.6, '#fff', '#c02030')}{O(9, 15, 1.6, '#fff', '#c02030')}
      {O(3, 9, 1.6, '#fff', '#c02030')}{O(15, 9, 1.6, '#fff', '#c02030')}
    </>
  ),
  snapPoint: S('M9 2v14M2 9h14', '#222', 1.3),
  snapCurve: <>{S('M3 15L15 3', '#222', 1)}{O(7, 11, 1.8, '#c02030')}</>,
  snapFace: <>{F('M2 15Q0 4 10 2l6 2q-6 4-6 11z', '#b8d0f4', '#5a74b0', 0.9)}{O(10, 6, 1.8, '#c02030')}</>,
  snapGrid: <>{F('M4 2l10 3v12L4 13z', '#fff', '#333')}{S('M7 3v11M11 4v12M4 6l10 3M4 10l10 3', '#333')}{O(9, 9, 1.4, '#c02030')}</>
};

// ---------- toolbar parts ----------

const Shell = styled.div`
  height: 100vh;
  display: flex;
  flex-direction: column;
`;

const Menu = styled.nav`
  flex: none;
  display: flex;
  align-items: flex-start;
  gap: 15px;
  height: 16px;
  overflow: hidden;
  background: #c8d8d6;
  font-size: 11px;
`;

const MenuItem = styled.a`
  height: 13px;
  color: #222;
  text-decoration: none;
  line-height: 4px;
  white-space: nowrap;
  ${({ $active }) => $active && css`
    width: 32px;
    margin-right: -9px;
    background: #fdf6d3;
    border: solid #efd98a;
    border-width: 0 1px 1px 0;
  `}
`;

const Row = styled.div`
  flex: none;
  display: flex;
  height: ${({ $h }) => $h || 34}px;
  overflow: hidden;
  background: #fff;
`;

const Bar = styled.div`
  flex: none;
  display: flex;
  align-items: center;
  height: ${({ $short }) => ($short ? 31 : 34)}px;
  margin-left: ${({ $shift }) => $shift || 0}px;
  border: solid #dcdcdc;
  border-width: 0 ${({ $plain }) => ($plain ? '0 0' : '1px 1px')} 0;
`;

const Tool = styled.button`
  flex: none;
  display: grid;
  place-items: center;
  width: ${({ $small }) => ($small ? 23 : 31)}px;
  height: ${({ $small }) => ($small ? 22 : 30)}px;
  padding: 0;
  border: 0;
  background: none;
  ${({ $on }) => $on && css`
    background: #c8d8d6;
    border: 1px solid #9fb3b2;
  `}
`;

const Glyph = styled.svg`
  display: block;
  width: ${({ $size }) => $size}px;
  height: ${({ $size }) => $size}px;
  overflow: visible;
`;

const Drop = styled.button`
  flex: none;
  display: grid;
  place-items: center;
  width: ${({ $w }) => $w}px;
  height: 24px;
  padding: ${({ $low }) => ($low ? 12 : 0)}px 0 0;
  border: 0;
  background: none;

  &::before {
    content: '';
    border: 3px solid transparent;
    border-top-color: #111;
    border-bottom-width: 0;
  }
`;

const Divider = styled.span`
  flex: none;
  width: 1px;
  height: 26px;
  margin: 0 2px 0 3px;
  background: #d9d9d9;
`;

const Grip = styled.span`
  flex: none;
  width: 3px;
  height: 28px;
  margin: 0 1px 0 3px;
  background: repeating-linear-gradient(#a6a6a6 0 2px, transparent 2px 4px);
`;

const More = styled.button`
  flex: none;
  display: flex;
  flex-direction: column;
  align-items: center;
  justify-content: space-between;
  width: 14px;
  height: 24px;
  margin-left: ${({ $gap }) => $gap}px;
  padding: 0 0 4px;
  border: 0;
  background: none;

  &::after {
    content: '';
    border: 3px solid transparent;
    border-top-color: #111;
    border-bottom-width: 0;
  }
`;

const Launch = styled.button`
  width: 33px;
  padding: 0;
  border: 0;
  background: none;
  display: flex;
  align-items: center;
  justify-content: space-between;
  font-size: 11px;
  white-space: nowrap;

  &::after {
    content: '';
    margin-right: 2px;
    border: 3px solid transparent;
    border-top-color: #111;
    border-bottom-width: 0;
  }
`;

const Search = styled.label`
  display: flex;
  align-items: center;
  width: 126px;
  height: 20px;
  margin: 0 1px 0 4px;
  padding-right: 2px;
  border: 1px solid #a0a0a0;
  background: #fff;
`;

const SearchInput = styled.input`
  flex: 1;
  min-width: 0;
  height: 18px;
  padding: 0 1px;
  border: 0;
  outline: 0;
  background: none;
  font-size: 11px;

  &::placeholder { color: #222; opacity: 1; }
`;

const Finish = styled.button`
  width: 47px;
  padding: 0;
  border: 0;
  background: none;
  color: #b4b4b4;
  font-size: 11px;
  text-align: left;
  white-space: nowrap;
`;

const Picker = styled.span`
  position: relative;
  flex: none;
  align-self: center;
  width: ${({ $w }) => $w}px;
  margin-right: ${({ $after }) => $after}px;

  &::after {
    content: '';
    position: absolute;
    right: 5px;
    top: 9px;
    border: 4px solid transparent;
    border-top-color: #111;
    border-bottom-width: 0;
    pointer-events: none;
  }
`;

const PickerSelect = styled.select`
  display: block;
  appearance: none;
  width: 100%;
  height: 20px;
  padding: 0 0 0 ${({ $flush }) => ($flush ? 0 : 2)}px;
  border: 1px solid #a0a0a0;
  border-left-width: ${({ $flush }) => ($flush ? 0 : 1)}px;
  border-radius: 0;
  background: #fff;
  font-size: 11px;
  line-height: 18px;
`;

/*
 * Bars are written as word lists:
 *   |  divider    :  grip    v  drop-down arrow    V  bar options arrow
 */
const Items = ({ list, small }) => {
  const icons = small ? SMALL : ICONS;
  return list.split(' ').map((word, i) => {
    const key = word + i;
    if (word === '|') return <Divider key={key} />;
    if (word === ':') return <Grip key={key} />;
    if (word === 'v') return <Drop key={key} $w={small ? 10 : 12} aria-label="more" />;
    if (word === 'V') return <Drop key={key} $w={13} $low aria-label="toolbar options" />;
    const on = word.startsWith('+');
    const name = on ? word.slice(1) : word;
    const size = small ? 18 : 24;
    return (
      <Tool key={key} $small={small} $on={on} aria-label={name} aria-pressed={on || undefined}>
        <Glyph $size={size} viewBox={`0 0 ${size} ${size}`}>{icons[name]}</Glyph>
      </Tool>
    );
  });
};

const MENUS = [
  ['编辑', 'E'], ['视图', 'V'], ['插入', 'S'], ['格式', 'R'], ['工具', 'T'], ['装配', 'A'],
  ['信息', 'I'], ['分析', 'L'], ['首选项', 'P'], ['窗口', 'O'], ['GC工具箱'], ['帮助', 'H']
];

const Chevrons = () => (
  <Glyph $size={8} viewBox="0 0 8 8">{S('M0.500 1l3 3-3 3M4.500 1l3 3-3 3', '#111', 1.4)}</Glyph>
);

// ---------- part navigator ----------

const Work = styled.div`
  flex: 1;
  min-height: 0;
  display: flex;
  border-top: 1px solid #808080;
`;

const Side = styled.aside`
  flex: none;
  display: flex;
  flex-direction: column;
  width: 148px;
  padding: 0 10px 6px 0;
  border-right: 1px solid #808080;
  background: #fff;
`;

const SideHead = styled.header`
  flex: none;
  display: flex;
  align-items: center;
  justify-content: space-between;
  height: 28px;
  padding: 2px 6px 0 1px;
`;

const MaxButton = styled.button`
  width: 12px;
  height: 11px;
  padding: 0;
  border: 1px solid #111;
  border-top-width: 2px;
  background: #fff;
`;

const Tree = styled.section`
  flex: 1;
  min-height: 0;
  display: flex;
  flex-direction: column;
  border: solid #d4d4d4;
  border-width: 1px 1px 0 0;
`;

const ColumnHead = styled.div`
  flex: none;
  display: flex;
  align-items: center;
  gap: 18px;
  height: 22px;
  padding: 2px 0 0 5px;
  border-bottom: 1px solid #d9d9d9;
  background: #f0f0f0;

  &::after {
    content: '';
    border: 5px solid transparent;
    border-bottom-color: #111;
    border-top-width: 0;
  }
`;

const Nodes = styled.ul`
  flex: 1;
  min-height: 0;
  margin: 0;
  padding: 0;
  list-style: none;
  overflow: hidden;
  background: repeating-linear-gradient(#fff 0 19px, #e8e8e8 19px 20px, #f9f9f9 20px 39px, #e8e8e8 39px 40px);
`;

const Node = styled.li`
  position: relative;
  display: flex;
  align-items: center;
  gap: 2px;
  height: 20px;
  padding-left: ${({ $depth }) => ($depth ? 39 : 18)}px;
  color: ${({ $muted }) => ($muted ? '#9c9c9c' : '#1a1a1a')};
  font-weight: ${({ $strong }) => ($strong ? 700 : 400)};
  white-space: nowrap;
  overflow: hidden;

  &::before {
    content: '';
    position: absolute;
    left: ${({ $depth }) => ($depth ? 27 : 8)}px;
    top: ${({ $first }) => ($first ? 10 : 0)}px;
    bottom: ${({ $last }) => ($last ? 10 : 0)}px;
    border-left: 1px dotted #8a8a8a;
  }
  &::after {
    content: '';
    position: absolute;
    left: ${({ $depth }) => ($depth ? 27 : 8)}px;
    top: 10px;
    width: 9px;
    border-top: 1px dotted #8a8a8a;
  }
`;

const Expander = styled.button`
  position: absolute;
  z-index: 1;
  left: 4px;
  top: 6px;
  width: 9px;
  height: 9px;
  padding: 0;
  border: 1px solid #d8d8d8;
  background:
    linear-gradient(#111, #111) center / 5px 1px no-repeat,
    linear-gradient(#111, #111) center / ${({ $open }) => ($open ? '0 0' : '1px 5px')} no-repeat,
    #fff;
`;

const NodeLabel = styled.label`
  display: flex;
  align-items: center;
  gap: 2px;
`;

const Tick = styled.input`
  appearance: none;
  width: 12px;
  height: 12px;
  margin: 0;
  border: 1px solid #000;
  background: #fff;

  &:checked::before {
    content: '';
    display: block;
    width: 10px;
    height: 10px;
    background: #1fae35;
    clip-path: polygon(0 50%, 20% 35%, 40% 55%, 85% 0, 100% 15%, 42% 100%);
  }
`;

const Scroll = styled.div`
  flex: none;
  display: flex;
  align-items: center;
  height: 17px;
  background: #f0f0f0;
`;

const ScrollButton = styled.button`
  display: grid;
  place-items: center;
  width: 15px;
  height: 17px;
  padding: 0;
  border: 0;
  background: none;
`;

const Thumb = styled.span`
  width: ${({ $w }) => $w}px;
  height: 15px;
  margin-right: auto;
  background: #cdcdcd;
`;

const Splitter = styled.div`
  flex: none;
  height: 6px;
  margin: 1px 0 0;
  border: solid #9c9c9c;
  border-width: 1px 0;
  background: #d4d4d4;
`;

const Fold = styled.button`
  flex: none;
  display: flex;
  align-items: center;
  justify-content: space-between;
  height: 24px;
  padding: 3px 0 0 4px;
  border: 0;
  border-bottom: 2px solid #cbcbcb;
  background: #fff;
  color: #1e7fa8;
  font-size: 14px;
`;

const NODE_ART = {
  clock: (
    <>
      {O(8, 8, 6.5, '#e8eef6', '#77818c', 1.8)}
      {S('M8 4v4.500h4', '#222', 1.4)}
    </>
  ),
  view: (
    <>
      {S('M2 4l6-3 5 3v7l-5 3-6-3zM8 1v13M2 4l6 3 5-3M2 11l6-4 5 4', '#1f9a50', 1.2)}
      {S('M8 14l7-2M11 15l4-3', '#d83a2a', 1.2)}
    </>
  ),
  camera: (
    <>
      {F('M1 5l11-4v10L2 15z', '#fff', '#d02a2a', 1.2)}
      {O(7, 8, 3.2, '#4a4a90', '#222', 0.8)}
      {O(7, 8, 1.2, '#b8c4f0')}
      {F('M11 5h4v6l-3 2z', '#222')}
    </>
  ),
  folder: (
    <>
      {F('M1 14V4l1-1h4l1 2h6v3', '#f2c62c', '#7a5a10', 0.9)}
      {F('M1 14l3-6h12l-3 6z', '#ffe060', '#7a5a10', 0.9)}
    </>
  ),
  csys: (
    <>
      {S('M3 1v10M3 4l9 7M3 9l8-5M5 6l2 6', '#333', 1.1)}
      {F('M9 5l6-3-4 5z', '#1f9a50')}
      {F('M8 11l6 2-5 2z', '#d02a2a')}
      {O(3, 1.5, 1.2, '#2a3ac0')}
    </>
  ),
  sketch: (
    <>
      {S('M2 2h5v4H2zM2 9h4v6H2zM9 9h5v5H9z', '#111', 1.2)}
      {S('M9 8l5-6', '#d8a030', 2)}
    </>
  ),
  extrude: (
    <>
      {F('M1 3l4-1h9l1 1v10l-3 1-3-1-3 1-5-1z', '#ff9a3c', '#98480c', 0.9)}
      {F('M6 4l3-1v10l-3 1z', '#ffd890')}
      {F('M12 4l2-1v9l-2 1z', '#ffc070')}
      {S('M5 4v10M9 3v10M12 4v10', '#a8500f', 0.8)}
      {S('M1 13l5 1 3-1 3 1', '#3a3a9a', 0.8)}
    </>
  ),
  chamfer: (
    <>
      {F('M1 4l5-3 9 5v9H7L1 10z', '#b4d4f4')}
      {F('M1 4l4-3 10 4-4 4z', '#ffc890', '#c03020')}
      {F('M1 4l10 5v5L1 9z', '#c4d4fa', '#39488f', 0.8)}
      {S('M4 4l6 3', '#222')}
    </>
  ),
  hole: F('M4 1v10l3 3 3-3V1', '#fff', '#222', 1.2),
  mirror: (
    <>
      {F('M8 7h5l3 3-3 4-5-2z', '#6f8ce4', '#2a3a8c', 0.8)}
      {F('M1 9l5-2v6l-4 0z', '#6f8ce4', '#2a3a8c', 0.8)}
      {F('M4 6l5-4 1 8-4 4z', '#ffae70', '#c8602a', 0.8)}
    </>
  )
};

const NODES = [
  { art: 'clock', text: '历史记录模式', first: true },
  { art: 'view', text: '模型视图', fold: 'closed' },
  { art: 'camera', text: '摄像机', fold: 'closed', check: true },
  { art: 'folder', text: '组', fold: 'closed' },
  { art: 'folder', text: '模型历史记录', fold: 'open', last: true },
  { depth: 1, art: 'csys', text: '基准坐标系', muted: true },
  { depth: 1, art: 'sketch', text: '草图 (1) "SK', muted: true },
  { depth: 1, art: 'extrude', text: '拉伸 (2)' },
  { depth: 1, art: 'extrude', text: '拉伸 (3)' },
  { depth: 1, art: 'extrude', text: '拉伸 (4)' },
  { depth: 1, art: 'chamfer', text: '倒斜角 (5)' },
  { depth: 1, art: 'extrude', text: '拉伸 (6)' },
  { depth: 1, art: 'sketch', text: '草图 (7) "SK', muted: true },
  { depth: 1, art: 'hole', text: '简单孔 (8)' },
  { depth: 1, art: 'mirror', text: '镜像特征 (9', strong: true, last: true }
];

const Hscroll = ({ width }) => (
  <Scroll>
    <ScrollButton aria-label="scroll left">
      <Glyph $size={8} viewBox="0 0 8 8">{S('M6 0L2 4l4 4', '#333', 1.6)}</Glyph>
    </ScrollButton>
    <Thumb $w={width} />
    <ScrollButton aria-label="scroll right">
      <Glyph $size={8} viewBox="0 0 8 8">{S('M2 0l4 4-4 4', '#333', 1.6)}</Glyph>
    </ScrollButton>
  </Scroll>
);

const Navigator = () => {
  const [hidden, setHidden] = useState({});
  const toggle = (i) => setHidden((h) => ({ ...h, [i]: !h[i] }));

  return (
    <Side>
      <SideHead>
        部件导航器
        <MaxButton aria-label="maximize" />
      </SideHead>
      <Tree>
        <ColumnHead>名称</ColumnHead>
        <Nodes>
          {NODES.map((n, i) => (
            <Node key={i} $depth={n.depth} $muted={n.muted} $strong={n.strong} $first={n.first} $last={n.last}>
              {n.fold && <Expander $open={n.fold === 'open'} aria-label="expand" />}
              {n.check && (
                <Glyph $size={14} viewBox="0 0 15 15">{F('M1 8l3-2 3 3 6-7 2 1-7 11H6z', '#18b030')}</Glyph>
              )}
              <NodeLabel>
                {n.depth && <Tick type="checkbox" checked={!hidden[i]} onChange={() => toggle(i)} />}
                <Glyph $size={17} viewBox="0 0 16 16">{NODE_ART[n.art]}</Glyph>
                {n.text}
              </NodeLabel>
            </Node>
          ))}
        </Nodes>
        <Hscroll width={28} />
      </Tree>
      <Splitter />
      {['相依性', '细节', '预览'].map((name) => (
        <Fold key={name}>
          {name}
          <Glyph $size={8} viewBox="0 0 8 8">{F('M0 0h2l3 5 3-5v3L5 8z', '#1e7fa8')}</Glyph>
        </Fold>
      ))}
      <Hscroll width={100} />
    </Side>
  );
};

// ---------- graphics window ----------

const View = styled.main`
  position: relative;
  flex: 1;
  min-width: 0;
  background: linear-gradient(#a4a4a5, #b4b7b9 45%, #c5cace 82%, #c6cbcf);
`;

const Scene = styled.svg`
  display: block;
  width: 100%;
  height: 100%;
`;

const Triad = styled.svg`
  position: absolute;
  left: 22px;
  bottom: 27px;
  width: 80px;
  height: 72px;
`;

const Ramp = ({ id, stops }) => (
  <linearGradient id={id}>
    {stops.map(([at, color]) => <stop key={at} offset={at} stopColor={color} />)}
  </linearGradient>
);

const Flange = () => (
  <Scene viewBox="148 150 1034 658">
    <defs>
      <Ramp id="rim" stops={[[0, '#b87000'], [0.12, '#a05f00'], [0.3, '#774700'], [0.45, '#643b00'], [0.85, '#643b00'], [0.95, '#865000'], [1, '#a86600']]} />
      <Ramp id="boss" stops={[[0, '#a86400'], [0.2, '#925600'], [0.5, '#643b00'], [0.85, '#643b00'], [1, '#885200']]} />
      <Ramp id="bore" stops={[[0, '#7a4700'], [0.25, '#633a00'], [0.5, '#6c4000'], [0.75, '#945800'], [1, '#c07400']]} />
      <Ramp id="hole" stops={[[0, '#643b00'], [0.4, '#6c4000'], [1, '#b06a00']]} />
    </defs>
    <g stroke="#2b2208" strokeWidth="1">
      <path d="M513.900 463.200L501.900 497.700A149 130.900 20.800 0 0 784.100 597.900L796.100 563.400z" fill="url(#rim)" />
      <ellipse cx="655" cy="513.300" rx="149.800" ry="131.600" transform="rotate(20.800 655 513.300)" fill="#ffe41e" />
      <ellipse cx="559.300" cy="558" rx="15.400" ry="13.600" transform="rotate(20 559.300 558)" fill="url(#hole)" />
      <ellipse cx="750.500" cy="470" rx="15.400" ry="13.600" transform="rotate(20 750.500 470)" fill="url(#hole)" />
      <path d="M603.400 443.700L587.400 490.400A71 62.300 20.800 0 0 722.600 538.400L738.600 491.700z" fill="url(#boss)" />
      <ellipse cx="671" cy="467.700" rx="71.800" ry="63" transform="rotate(20.800 671 467.700)" fill="#ffe41e" />
      <ellipse cx="671.700" cy="468.200" rx="48" ry="42.200" transform="rotate(20.800 671.700 468.200)" fill="#dd8b10" />
      <ellipse cx="670.500" cy="469.200" rx="45.500" ry="40.400" transform="rotate(20.800 670.500 469.200)" fill="url(#bore)" strokeWidth="0.800" />
      <path d="M711 443.500L717.500 453L713 456L691 506.500L684 507.500L707 449z" fill="#8a6018" strokeWidth="0.800" />
      <path d="M711 445L685 507M713 456L697 503" fill="none" strokeWidth="0.800" />
      <path d="M709 447L712.500 452L688.500 507L684.500 507.500z" fill="#57380a" stroke="none" />
    </g>
  </Scene>
);

const Axes = () => (
  <Triad viewBox="170 709 80 72">
    <g fill="none" stroke="#acacac">
      <path d="M190 735l22-11 9 15-22 12zM190 735l-2 9 8 12 5-7M196 756l22-7 3-10M212 724l-5 7-8 7" />
    </g>
    <path d="M202.500 750L186 723" stroke="#c8323c" strokeWidth="3" />
    <path d="M183 719l6 5-4 3z" fill="#d8323c" />
    <path d="M203 750l24-10" stroke="#2f8a34" strokeWidth="3" />
    <path d="M225 737.500l10-1-8 6z" fill="#2f8a34" />
    <path d="M202 751l-4 14" stroke="#1c34b8" strokeWidth="3" />
    <circle cx="202.500" cy="750" r="4" fill="#e4e4e4" stroke="#999" strokeWidth="0.600" />
    <g fontSize="12">
      <text x="178" y="721" fill="#c8323c">X</text>
      <text x="235" y="739" fill="#2f8a34">Y</text>
      <text x="192" y="774" fill="#1c44d8">Z</text>
    </g>
  </Triad>
);

const App = () => (
  <Shell>
    <GlobalStyle />
    <Menu>
      <MenuItem href="#file" $active>件(<u>F</u>)</MenuItem>
      {MENUS.map(([name, hot]) => (
        <MenuItem key={name} href={`#${name}`}>
          {name}{hot && <>(<u>{hot}</u>)</>}
        </MenuItem>
      ))}
    </Menu>

    <Row>
      <Bar>
        <Launch>启动</Launch>
        <Items list="new open save | cut copy paste | undo v redo | assembly v | info |" />
        <Search>
          <SearchInput aria-label="查找命令" placeholder="查找命令" />
          <Glyph $size={15} viewBox="0 0 15 15">
            {O(9.5, 5, 4, '#fff', '#333', 1.3)}
            {O(9.5, 5, 1.8, 'none', '#666', 0.8)}
            {S('M6.500 8L1 14M7.500 9L2 15', '#333', 1)}
          </Glyph>
        </Search>
        <Items list="V" />
      </Bar>
      <Bar>
        <Items list=": fit v bracket v cube v clip clipEdit v pane v | door doors V" />
      </Bar>
      <Bar $shift={8}>
        <Items list=": layersList axes v | handDiamond palette | playDiamond v | measure v ruler V" />
      </Bar>
    </Row>

    <Row>
      <Bar $shift={-3}>
        <Items list="v extrude revolve holeCube pad rib inset | offsetUp studs cubes mirror unite v trimBox trimSheet slab draft replace | edgeBlend faceBlend chamfer" />
        <More $gap={28} aria-label="more tools"><Chevrons /></More>
      </Bar>
      <Bar>
        <Items list=": moveFace v pullFace v deleteFace copyFace v patternFace v dimFace v groupFace resize moveAll v V" />
      </Bar>
      <Bar>
        <Items list=": surf mesh surfHole surfNet surfCurve" />
      </Bar>
    </Row>

    <Row>
      <Bar $shift={-3}>
        <Items list="layers layersList | tag | stepCheck sketchCheck boxCheck | abc V" />
      </Bar>
      <Bar>
        <Items list=": weldA weldB handList V" />
      </Bar>
      <Bar>
        <Items list=": coil spring rings | springX V" />
      </Bar>
      <Bar $shift={94}>
        <Items list=": triangle tableTri folderPlus folderCircle note dimBrush | fitSearch V" />
      </Bar>
      <Bar>
        <Items list=": lock unlock V" />
      </Bar>
    </Row>

    <Row $h={31}>
      <Picker $w={97} $after={7}>
        <PickerSelect $flush aria-label="选择过滤器">
          <option>择过滤器</option>
        </PickerSelect>
      </Picker>
      <Picker $w={140} $after={4}>
        <PickerSelect aria-label="选择范围">
          <option>整个装配</option>
        </PickerSelect>
      </Picker>
      <Bar $plain $short>
        <Items
          small
          list="filterBox | filterUndo filterSel v rotSel backSel | marquee v | meshBody solidBody | +snapAll +snapEnd +snapMid snapCtrl +snapPole snapCross +snapCenter snapQuad +snapPoint +snapCurve snapFace | snapGrid"
        />
      </Bar>
    </Row>

    <Work>
      <Navigator />
      <View>
        <Flange />
        <Axes />
      </View>
    </Work>

    <Row $h={27}>
      <Bar $shift={-3}>
        <Items list="v wireCubes greyPane addPart v movePart mirrorPart constrain | connector partCubes stairs | crate | chain chainLink partTree" />
        <More $gap={20} aria-label="more tools"><Chevrons /></More>
      </Bar>
      <Bar>
        <Items list=": sketch flag" />
        <Finish disabled>完成草图</Finish>
        <Items list="profile line arc circle fillet corner rect spline plus offsetCurve v | trim extend makeCorner | dimension v | parallel symmetric constraints v |" />
      </Bar>
    </Row>
  </Shell>
);

export default App;
